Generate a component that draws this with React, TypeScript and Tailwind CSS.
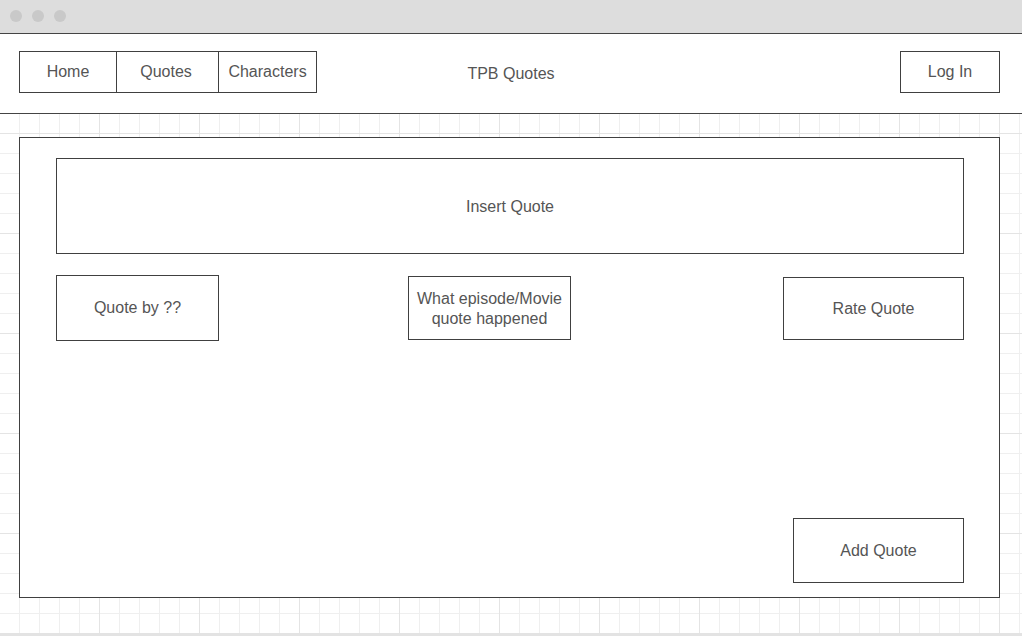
import React from "react";

const box = "border border-[#404040] bg-white flex items-center justify-center text-center";

export default function App() {
  return (
    <div className="w-[1022px] h-[636px] overflow-hidden flex flex-col font-['Liberation_Sans',Arial,sans-serif] text-[16px] leading-[20px] text-[#555555] bg-white">
      {/* Title bar */}
      <div className="h-[34px] shrink-0 bg-[#dddddd] border-b border-[#444444] flex items-center gap-[10px] pl-[10px] pb-px">
        <span className="w-[12px] h-[12px] rounded-full bg-[#c9c9c9]" />
        <span className="w-[12px] h-[12px] rounded-full bg-[#c9c9c9]" />
        <span className="w-[12px] h-[12px] rounded-full bg-[#c9c9c9]" />
      </div>

      {/* Header */}
      <div className="h-[80px] shrink-0 border-b border-[#444444] grid grid-cols-[1fr_auto_1fr] items-start pt-[17px] px-[19px]">
        <div className="flex">
          <div className={`${box} w-[98px] h-[42px]`}>Home</div>
          <div className={`${box} w-[103px] h-[42px] -ml-px pr-[3px]`}>Quotes</div>
          <div className={`${box} w-[99px] h-[42px] -ml-px`}>Characters</div>
        </div>
        <div className="pt-[13px]">TPB Quotes</div>
        <div className="flex justify-end pr-[3px]">
          <div className={`${box} w-[100px] h-[42px]`}>Log In</div>
        </div>
      </div>

      {/* Canvas with grid */}
      <div className="flex-1 relative bg-white [background-image:linear-gradient(to_right,#e4e4e4_1px,transparent_1px),linear-gradient(to_bottom,#e4e4e4_1px,transparent_1px),linear-gradient(to_right,#efefef_1px,transparent_1px),linear-gradient(to_bottom,#efefef_1px,transparent_1px)] [background-size:100px_100px,100px_100px,20px_20px,20px_20px] [background-position:99px_19px,99px_19px,19px_19px,19px_19px] pt-[23px] pl-[19px]">
        <div className="w-[981px] h-[461px] border border-[#404040] bg-white flex flex-col pt-[20px] pl-[36px] pr-[35px] pb-[14px]">
          <div className={`${box} h-[96px] w-full pt-[2px]`}>Insert Quote</div>
          <div className="flex items-start mt-[21px]">
            <div className={`${box} w-[163px] h-[66px]`}>Quote by ??</div>
            <div className={`${box} w-[163px] h-[64px] ml-[189px] mt-[1px] px-[6px] pt-[2px]`}>What episode/Movie quote happened</div>
            <div className={`${box} w-[181px] h-[63px] ml-auto mt-[2px]`}>Rate Quote</div>
          </div>
          <div className="flex-1" />
          <div className={`${box} w-[171px] h-[65px] self-end`}>Add Quote</div>
        </div>
      </div>

      {/* Bottom bar */}
      <div className="h-[3px] shrink-0 bg-[#e3e3e3]" />
    </div>
  );
}
